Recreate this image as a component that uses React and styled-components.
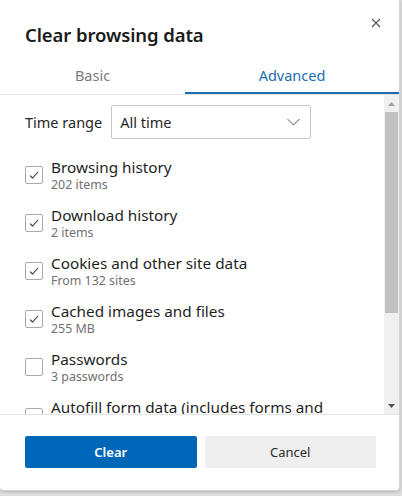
import React from "react";
import styled, { createGlobalStyle } from "styled-components";

const Global = createGlobalStyle`
  html, body { margin: 0; padding: 0; }
  body {
    background: #dedede;
    font-family: "Noto Sans", "Open Sans", sans-serif;
    width: 402px;
    height: 496px;
    overflow: hidden;
  }
  * { box-sizing: border-box; }
`;

const Dialog = styled.div`
  width: 400px;
  height: 491px;
  background: #fff;
  border: 1px solid #d4d4d4;
  border-top: none;
  border-left: none;
  border-radius: 0 0 4px 4px;
  box-shadow: 0 1px 3px rgba(0, 0, 0, 0.2);
  display: flex;
  flex-direction: column;
  position: relative;
`;

const Header = styled.div`
  padding: 22px 25px 0 25px;
  height: 56px;
`;

const Title = styled.h1`
  margin: 0;
  font-size: 18.5px;
  line-height: 26px;
  font-weight: 600;
  color: #1b1b1b;
  letter-spacing: -0.1px;
`;

const CloseButton = styled.button`
  position: absolute;
  top: 13px;
  right: 13px;
  width: 20px;
  height: 20px;
  border: none;
  background: transparent;
  padding: 0;
  display: flex;
  align-items: center;
  justify-content: center;
`;

const Tabs = styled.div`
  display: grid;
  grid-template-columns: 185px 1fr;
  border-bottom: 1px solid #e3e3e3;
  height: 39px;
`;

const Tab = styled.div`
  display: flex;
  align-items: center;
  justify-content: center;
  font-size: 14.5px;
  color: ${(p) => (p.$active ? "#1a6db3" : "#7a7a7a")};
  border-bottom: 2px solid ${(p) => (p.$active ? "#1a6db3" : "transparent")};
  padding-top: 1px;
`;

const ScrollArea = styled.div`
  display: flex;
  height: 320px;
  border-bottom: 1px solid #e3e3e3;
`;

const Content = styled.div`
  flex: 1;
  overflow: hidden;
  padding: 10px 25px 0 25px;
`;

const Scrollbar = styled.div`
  width: 15px;
  background: #f0f0f0;
  display: flex;
  flex-direction: column;
  align-items: center;
`;

const Arrow = styled.div`
  height: 17px;
  width: 100%;
  display: flex;
  align-items: center;
  justify-content: center;
`;

const Thumb = styled.div`
  width: 13px;
  height: 201px;
  background: #c1c1c1;
`;

const Spacer = styled.div`
  flex: 1;
`;

const RangeRow = styled.div`
  display: flex;
  align-items: center;
  gap: 9px;
  margin-bottom: 18px;
`;

const RangeLabel = styled.span`
  font-size: 14.5px;
  color: #262626;
`;

const Select = styled.div`
  width: 200px;
  height: 34px;
  border: 1px solid #c8c8c8;
  border-radius: 2px;
  display: flex;
  align-items: center;
  justify-content: space-between;
  padding: 0 10px 0 8px;
  font-size: 14.5px;
  color: #262626;
`;

const Item = styled.div`
  display: flex;
  align-items: center;
  gap: 8px;
  margin-bottom: 12px;
`;

const Box = styled.div`
  width: 18px;
  height: 18px;
  flex: none;
  border: 1px solid #a9a9a9;
  border-radius: 2px;
  display: flex;
  align-items: center;
  justify-content: center;
`;

const Texts = styled.div`
  display: flex;
  flex-direction: column;
  padding-right: 8px;
`;

const Label = styled.div`
  font-size: 15.3px;
  line-height: 20px;
  color: #1f1f1f;
`;

const Sub = styled.div`
  font-size: 12.4px;
  line-height: 16px;
  color: #707070;
`;

const Footer = styled.div`
  display: grid;
  grid-template-columns: 1fr 1fr;
  gap: 8px;
  padding: 21px 23px 0 25px;
`;

const Button = styled.button`
  height: 32px;
  border: none;
  border-radius: 2px;
  font-family: inherit;
  font-size: 13px;
  font-weight: ${(p) => (p.$primary ? 600 : 400)};
  background: ${(p) => (p.$primary ? "#0067b8" : "#efefef")};
  color: ${(p) => (p.$primary ? "#ffffff" : "#2b2b2b")};
`;

const Check = () => (
  <svg width="12" height="12" viewBox="0 0 12 12">
    <path d="M2 6.6 L4.6 9 L10 3" fill="none" stroke="#333" strokeWidth="1.1" />
  </svg>
);

const items = [
  { label: "Browsing history", sub: "202 items", checked: true },
  { label: "Download history", sub: "2 items", checked: true },
  { label: "Cookies and other site data", sub: "From 132 sites", checked: true },
  { label: "Cached images and files", sub: "255 MB", checked: true },
  { label: "Passwords", sub: "3 passwords", checked: false },
  { label: "Autofill form data (includes forms and cards)", sub: "", checked: false },
];

export default function App() {
  return (
    <>
      <Global />
      <Dialog>
        <Header>
          <Title>Clear browsing data</Title>
        </Header>
        <CloseButton aria-label="Close">
          <svg width="10" height="10" viewBox="0 0 10 10">
            <path d="M1 1 L9 9 M9 1 L1 9" stroke="#555" strokeWidth="1.1" />
          </svg>
        </CloseButton>
        <Tabs>
          <Tab>Basic</Tab>
          <Tab $active>Advanced</Tab>
        </Tabs>
        <ScrollArea>
          <Content>
            <RangeRow>
              <RangeLabel>Time range</RangeLabel>
              <Select>
                <span>All time</span>
                <svg width="13" height="8" viewBox="0 0 13 8">
                  <path d="M0.5 1 L6.5 7 L12.5 1" fill="none" stroke="#555" strokeWidth="1" />
                </svg>
              </Select>
            </RangeRow>
            {items.map((it) => (
              <Item key={it.label}>
                <Box>{it.checked && <Check />}</Box>
                <Texts>
                  <Label>{it.label}</Label>
                  {it.sub && <Sub>{it.sub}</Sub>}
                </Texts>
              </Item>
            ))}
          </Content>
          <Scrollbar>
            <Arrow>
              <svg width="7" height="4" viewBox="0 0 7 4">
                <path d="M0 4 L3.5 0 L7 4 Z" fill="#a3a3a3" />
              </svg>
            </Arrow>
            <Thumb />
            <Spacer />
            <Arrow>
              <svg width="7" height="4" viewBox="0 0 7 4">
                <path d="M0 0 L3.5 4 L7 0 Z" fill="#505050" />
              </svg>
            </Arrow>
          </Scrollbar>
        </ScrollArea>
        <Footer>
          <Button $primary>Clear</Button>
          <Button>Cancel</Button>
        </Footer>
      </Dialog>
    </>
  );
}
